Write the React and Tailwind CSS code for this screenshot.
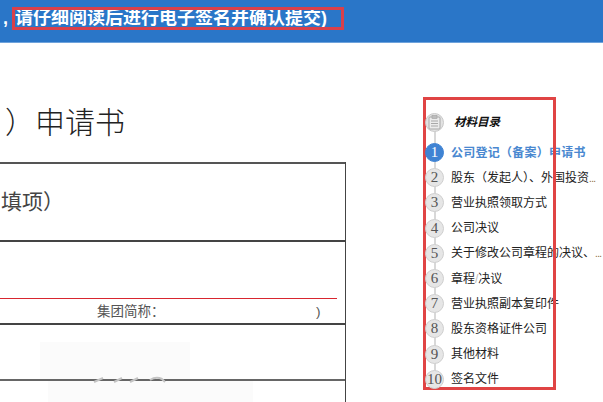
import React from 'react';

const cjk = 'font-["Liberation_Sans","Noto_Sans_CJK_SC",sans-serif]';

const materials = [
  { label: '公司登记（备案）申请书', active: true },
  { label: '股东（发起人）、外国投资', more: true },
  { label: '营业执照领取方式' },
  { label: '公司决议' },
  { label: '关于修改公司章程的决议、', more: true },
  { label: <>章程<span className="text-[#bbbbbb]">/</span>决议</> },
  { label: '营业执照副本复印件' },
  { label: '股东资格证件公司' },
  { label: '其他材料' },
  { label: '签名文件' },
];

const ClipboardIcon = () => (
  <div className="relative z-10 flex h-[19px] w-[19px] items-center justify-center rounded-full border border-[#c9c9c9] bg-[#e3e3e3]">
    <svg width="13" height="15" viewBox="0 0 13 15" fill="none">
      <rect x="1" y="2" width="11" height="12" rx="1" fill="#ececec" stroke="#a8a8a8" />
      <rect x="4" y="0.5" width="5" height="3" fill="#bdbdbd" stroke="#a0a0a0" strokeWidth="0.6" />
      <path d="M3 6h7M3 8.5h7M3 11h7" stroke="#a8a8a8" />
    </svg>
  </div>
);

const MaterialRow = ({ index, label, active, more }) => (
  <div className="flex h-[25.2px] items-center">
    <div
      className={`relative z-10 flex h-[19px] w-[19px] shrink-0 items-center justify-center rounded-full border font-['Liberation_Serif',serif] text-[15px] leading-none ${
        active ? 'border-[#3f83d3] bg-[#3f83d3] text-white' : 'border-[#cfcfcf] bg-[#e6e6e6] text-[#555555]'
      }`}
    >
      {index}
    </div>
    <div className={`ml-[7px] whitespace-nowrap text-[12px] ${active ? 'font-bold tracking-[0.25px] text-[#4a88d0]' : 'text-[#222222]'}`}>
      {label}
      {more && <span className="text-[10px] tracking-[-0.6px] text-[#8a6a3a]">...</span>}
    </div>
  </div>
);

export default function App() {
  return (
    <div className={`relative h-[402px] w-[603px] overflow-hidden bg-white ${cjk}`}>
      <header className="relative flex h-[43px] items-start border-b border-[#6fa3dc] bg-[#2a76c8] pl-[3px] pt-[6px]">
        <div className="whitespace-nowrap text-[18px] font-bold leading-[24px] text-white">
          ,<span className="ml-[7px]">请仔细阅读后进行电子签名并确认提交)</span>
        </div>
        <div className="absolute left-[12px] top-[7px] h-[23px] w-[332px] border-[3px] border-[#d9404a]" />
      </header>

      <main className="flex">
        <section className="w-[346px] shrink-0">
          <h1 className="ml-[5px] mt-[60px] h-[59px] whitespace-nowrap font-['Liberation_Serif','Noto_Sans_CJK_SC',serif] text-[30px] font-light leading-[40px] text-[#222222]">
            ）申请书
          </h1>

          <div className="relative border-r border-[#444444]">
            <div className="flex h-[78px] items-center border-t-2 border-[#555555] pb-[1px]">
              <span className="ml-[1px] text-[21px] text-[#444444]">填项）</span>
            </div>
            <div className="h-[83px] border-t-2 border-[#444444] pt-[56px]">
              <div className="mr-[8px] h-px bg-[#d8262f]" />
              <div className="relative pl-[97px] pt-[4px] text-[13.5px] leading-[18px] text-[#555555]">
                集团简称：
                <span className="absolute left-[316px] top-[4px]">)</span>
              </div>
            </div>
            <div className="h-[56px] border-t-2 border-[#444444] pl-[40px] pt-[17px]">
              <div className="h-[37px] w-[150px] bg-[#fbfbfb]" />
            </div>
            <div className="h-[23px] border-t-2 border-[#666666] pl-[48px]">
              <div className="h-full w-[205px] bg-[#fbfbfb]" />
            </div>
            <svg className="absolute left-[90px] top-[214px]" width="80" height="8" viewBox="0 0 80 8" fill="none">
              <path d="M4 6l9-4M24 6l8-4M40 6l8-4M60 4q6-4 12-1l3 3" stroke="#c4c4c4" strokeWidth="2" />
            </svg>
          </div>
        </section>

        <aside className="relative ml-[79px] mt-[67px] flex-1">
          <div className="absolute bottom-[14px] left-[9px] top-[8px] w-[2px] bg-[#d8d8d8]" />
          <div className="flex h-[25px] items-center">
            <ClipboardIcon />
            <span className="ml-[10px] text-[11.5px] font-bold italic text-[#111111]">材料目录</span>
          </div>
          <div className="mt-[5px]">
            {materials.map((m, i) => (
              <MaterialRow key={i} index={i + 1} label={m.label} active={m.active} more={m.more} />
            ))}
          </div>
        </aside>
      </main>

      <div className="absolute left-[423px] top-[97px] h-[293px] w-[133px] border-[3px] border-[#e04444]" />
    </div>
  );
}
